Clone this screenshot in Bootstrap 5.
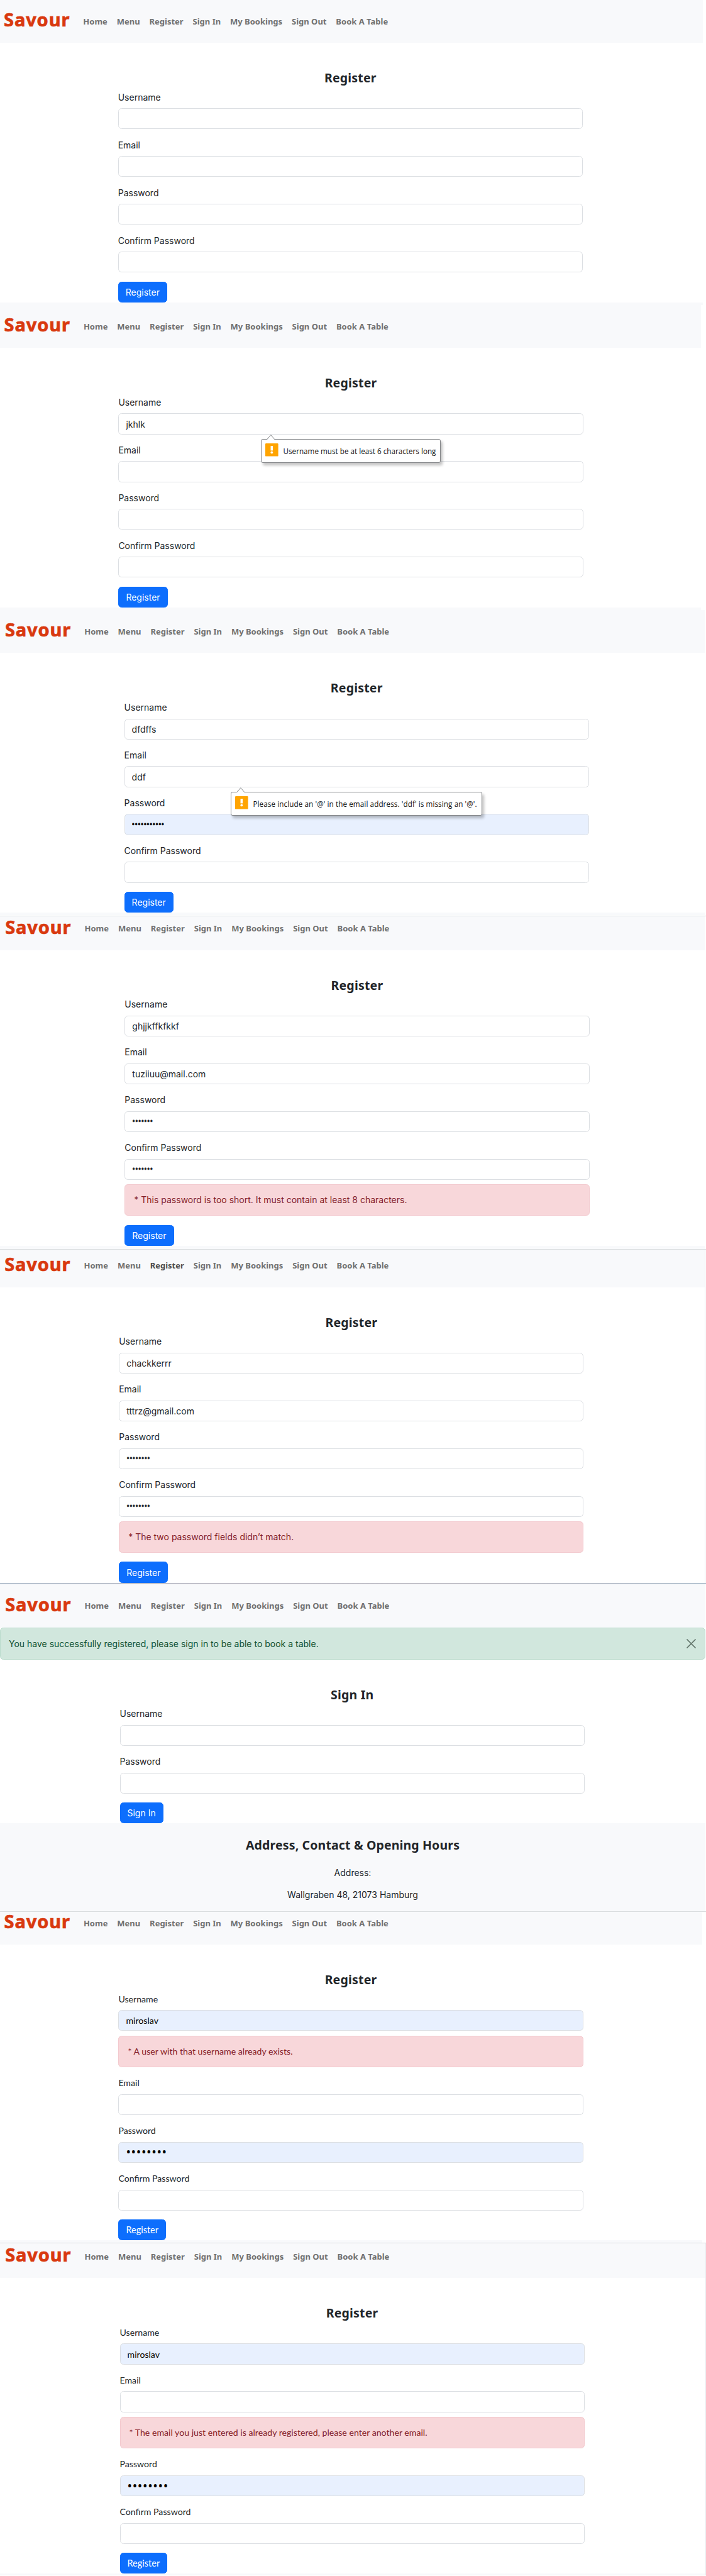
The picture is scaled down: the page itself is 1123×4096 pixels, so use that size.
<!DOCTYPE html>
<html lang="en">
<head>
<meta charset="utf-8">
<meta name="viewport" content="width=device-width, initial-scale=1">
<title>Savour</title>
<link rel="stylesheet" href="https://cdn.jsdelivr.net/npm/bootstrap@5.3.0/dist/css/bootstrap.min.css">
<style>
  body { font-family: Inter, "Liberation Sans", sans-serif; font-size: 14px; line-height: 21.4px; color: #212529; background: #fff; overflow-x: hidden; }
  .screen { width: var(--w, 1123px); }
  .screen.edge { border-right: 1px solid #e9ecef; }
  .site-nav { --bs-navbar-nav-link-padding-x: 7.45px; height: var(--nav, 68.3px); padding: 0 0 22.1px calc(6px + var(--dx, 0px)); background: #f8f9fb; font-family: "Noto Sans", sans-serif; align-items: flex-end; flex-wrap: nowrap; justify-content: flex-start; }
  .site-nav .navbar-brand { font-size: 29px; line-height: 30px; letter-spacing: .9px; font-weight: 700; -webkit-text-stroke: .7px #d9390f; color: #d9390f; padding: 0; margin: 0; width: 118.9px; }
  .site-nav .nav-link { font-size: 13px; line-height: 20px; font-weight: 700; padding-top: 0; padding-bottom: 0; margin-bottom: 2.5px; color: #707070; white-space: nowrap; }
  .site-nav .nav-link.hovered { color: #4b4c4c; }
  .form-col { width: 739.3px; margin-left: var(--left, 188px); padding-top: 43px; }
  .page-title { font-family: "Noto Sans", sans-serif; font-weight: 700; font-size: 19.5px; line-height: 25.4px; letter-spacing: .2px; text-align: center; margin: 0 0 7px; }
  .field { margin-bottom: 14.2px; position: relative; }
  .field .form-label { display: block; height: 21.4px; margin: 0 0 7.3px; }
  .field .form-control { height: 33.1px; padding: 0 11px; font-size: 14px; line-height: 21px; border-radius: 5.4px; border-color: #dcdfe3; color: #212529; }
  .field .form-control.autofilled { background: #e8f0fe; color: #000; }
  .field .form-control.masked { font-family: "Noto Sans", sans-serif; font-size: 12.5px; padding-bottom: 1px; -webkit-text-stroke: .5px currentColor; }
  .msg { height: 50.4px; margin: 7.2px 0 0; padding: 0 14px; border-radius: 5.4px; display: flex; align-items: center; }
  .msg.alert-danger { background: #f8d7da; border-color: #f3c9ce; color: #842029; }
  .msg.alert-success { background: #d1e7dd; border-color: #badbcc; color: #0f5132; margin: 0; height: 50.9px; padding: 0 14px 0 13px; justify-content: space-between; }
  .send { height: 33.1px; padding: 0 11px; font-size: 14px; line-height: 31px; border-radius: 5.4px; background: #0d6efd; border-color: #0d6efd; display: block; }
  .foot-strip { height: var(--strip, 4.4px); background: #f8f9fb; }
  .rule { height: 1.1px; background: #d9dcde; }
  .seam { height: 1.6px; }
  .window-line { height: 1.2px; background: #a9b3be; }
  .window-glow { height: 1.2px; background: linear-gradient(90deg, #cfe0f3, #f3dce2 30%, #f6dfe0 70%, #cfe6f7); }
  .hint { position: absolute; z-index: 2; top: calc(100% + 7.6px); height: 38px; padding: 0 7px 0 6px; display: flex; align-items: center; gap: 7.5px; background: #fff; border: 1px solid #85878a; border-radius: 3px; box-shadow: 3px 4px 4px rgba(0,0,0,.24); font-family: "Open Sans", sans-serif; font-size: 11.7px; color: #111; white-space: nowrap; }
  .hint .warn { width: 20.6px; height: 20.6px; margin-bottom: 3px; flex: none; }
  .hint .tip { position: absolute; left: 8px; top: -8.2px; width: 14px; height: 9px; }
  .hint span { padding-top: 1.5px; }
  .hint-user { left: 227px; }
  .hint-mail { left: 169.7px; letter-spacing: .09px; }
  .lato { font-family: Lato, sans-serif; font-size: 14.15px; }
  .lato .form-control { font-size: 14.15px; }
  .lato .send { font-family: Lato, sans-serif; font-size: 14.5px; }
  .lato .form-control.masked { font-size: 20px; letter-spacing: .65px; -webkit-text-stroke: 0; }
  .site-foot { height: 139.8px; background: #f8f9fb; text-align: center; padding-top: 22.4px; }
  .site-foot h2 { font-family: "Noto Sans", sans-serif; font-weight: 700; font-size: 19.5px; line-height: 24px; letter-spacing: .15px; margin: 0 0 21.6px; }
  .site-foot p { margin: 0 0 13.8px; }
</style>
</head>
<body>

<section class="screen" style="--w:1118px;--left:187.7px">
  <nav class="navbar navbar-expand site-nav">
    <a class="navbar-brand">Savour</a>
    <div class="navbar-nav"><a class="nav-link">Home</a><a class="nav-link">Menu</a><a class="nav-link">Register</a><a class="nav-link">Sign In</a><a class="nav-link">My Bookings</a><a class="nav-link">Sign Out</a><a class="nav-link">Book A Table</a></div>
  </nav>
  <form class="form-col">
    <h2 class="page-title">Register</h2>
    <div class="field"><label class="form-label">Username</label><input class="form-control"></div>
    <div class="field"><label class="form-label">Email</label><input class="form-control"></div>
    <div class="field"><label class="form-label">Password</label><input class="form-control"></div>
    <div class="field"><label class="form-label">Confirm Password</label><input class="form-control"></div>
    <button type="button" class="btn btn-primary send">Register</button>
  </form>
  <div class="foot-strip"></div>
</section>

<section class="screen" style="--w:1114.5px;--left:188.4px;--dx:.6px">
  <nav class="navbar navbar-expand site-nav">
    <a class="navbar-brand">Savour</a>
    <div class="navbar-nav"><a class="nav-link">Home</a><a class="nav-link">Menu</a><a class="nav-link">Register</a><a class="nav-link">Sign In</a><a class="nav-link">My Bookings</a><a class="nav-link">Sign Out</a><a class="nav-link">Book A Table</a></div>
  </nav>
  <form class="form-col">
    <h2 class="page-title">Register</h2>
    <div class="field"><label class="form-label">Username</label><input class="form-control" value="jkhlk">
      <div class="hint hint-user">
        <svg class="tip" viewBox="0 0 14 9"><path d="M0 8.5 L6.8 .7 L13.6 8.5 V9 H0Z" fill="#fff"/><path d="M.4 8 L6.8 .7 L13.2 8" fill="none" stroke="#85878a"/></svg>
        <svg class="warn" viewBox="0 0 21 21"><rect width="21" height="21" rx="1.2" fill="#ffa400"/><path d="M8.7 4.2h3.6v7.4H8.7z" fill="#fff"/><circle cx="10.5" cy="14.7" r="1.9" fill="#fff"/></svg>
        <span>Username must be at least 6 characters long</span>
      </div>
    </div>
    <div class="field"><label class="form-label">Email</label><input class="form-control"></div>
    <div class="field"><label class="form-label">Password</label><input class="form-control"></div>
    <div class="field"><label class="form-label">Confirm Password</label><input class="form-control"></div>
    <button type="button" class="btn btn-primary send">Register</button>
  </form>
  <div class="foot-strip"></div>
</section>

<section class="screen" style="--w:1121px;--left:197.6px;--dx:1.9px;--strip:4px">
  <nav class="navbar navbar-expand site-nav">
    <a class="navbar-brand">Savour</a>
    <div class="navbar-nav"><a class="nav-link">Home</a><a class="nav-link">Menu</a><a class="nav-link">Register</a><a class="nav-link">Sign In</a><a class="nav-link">My Bookings</a><a class="nav-link">Sign Out</a><a class="nav-link">Book A Table</a></div>
  </nav>
  <form class="form-col">
    <h2 class="page-title">Register</h2>
    <div class="field"><label class="form-label">Username</label><input class="form-control" value="dfdffs"></div>
    <div class="field"><label class="form-label">Email</label><input class="form-control" value="ddf">
      <div class="hint hint-mail">
        <svg class="tip" viewBox="0 0 14 9"><path d="M0 8.5 L6.8 .7 L13.6 8.5 V9 H0Z" fill="#fff"/><path d="M.4 8 L6.8 .7 L13.2 8" fill="none" stroke="#85878a"/></svg>
        <svg class="warn" viewBox="0 0 21 21"><rect width="21" height="21" rx="1.2" fill="#ffa400"/><path d="M8.7 4.2h3.6v7.4H8.7z" fill="#fff"/><circle cx="10.5" cy="14.7" r="1.9" fill="#fff"/></svg>
        <span>Please include an '@' in the email address. 'ddf' is missing an '@'.</span>
      </div>
    </div>
    <div class="field"><label class="form-label">Password</label><input class="form-control autofilled masked" value="•••••••••••"></div>
    <div class="field"><label class="form-label">Confirm Password</label><input class="form-control"></div>
    <button type="button" class="btn btn-primary send">Register</button>
  </form>
  <div class="foot-strip"></div>
</section>

<div class="seam"></div>
<div class="rule"></div>
<section class="screen" style="--w:1121px;--left:198.3px;--dx:2.2px;--nav:53.2px;--strip:5.7px">
  <nav class="navbar navbar-expand site-nav">
    <a class="navbar-brand">Savour</a>
    <div class="navbar-nav"><a class="nav-link">Home</a><a class="nav-link">Menu</a><a class="nav-link">Register</a><a class="nav-link">Sign In</a><a class="nav-link">My Bookings</a><a class="nav-link">Sign Out</a><a class="nav-link">Book A Table</a></div>
  </nav>
  <form class="form-col">
    <h2 class="page-title">Register</h2>
    <div class="field"><label class="form-label">Username</label><input class="form-control" value="ghjjkffkfkkf"></div>
    <div class="field"><label class="form-label">Email</label><input class="form-control" value="tuziiuu@mail.com"></div>
    <div class="field"><label class="form-label">Password</label><input class="form-control masked" value="•••••••"></div>
    <div class="field"><label class="form-label">Confirm Password</label><input class="form-control masked" value="•••••••">
      <div class="alert alert-danger msg">* This password is too short. It must contain at least 8 characters.</div></div>
    <button type="button" class="btn btn-primary send">Register</button>
  </form>
  <div class="foot-strip"></div>
</section>

<div class="rule"></div>
<section class="screen edge" style="--w:1122px;--left:189.2px;--dx:1.2px;--nav:59.2px">
  <nav class="navbar navbar-expand site-nav">
    <a class="navbar-brand">Savour</a>
    <div class="navbar-nav"><a class="nav-link">Home</a><a class="nav-link">Menu</a><a class="nav-link hovered">Register</a><a class="nav-link">Sign In</a><a class="nav-link">My Bookings</a><a class="nav-link">Sign Out</a><a class="nav-link">Book A Table</a></div>
  </nav>
  <form class="form-col">
    <h2 class="page-title">Register</h2>
    <div class="field"><label class="form-label">Username</label><input class="form-control" value="chackkerrr"></div>
    <div class="field"><label class="form-label">Email</label><input class="form-control" value="tttrz@gmail.com"></div>
    <div class="field"><label class="form-label">Password</label><input class="form-control masked" value="••••••••"></div>
    <div class="field"><label class="form-label">Confirm Password</label><input class="form-control masked" value="••••••••">
      <div class="alert alert-danger msg">* The two password fields didn’t match.</div></div>
    <button type="button" class="btn btn-primary send">Register</button>
  </form>
</section>

<div class="window-line"></div>
<div class="window-glow"></div>
<section class="screen" style="--w:1122px;--left:190.5px;--dx:2.2px;--nav:69px">
  <nav class="navbar navbar-expand site-nav">
    <a class="navbar-brand">Savour</a>
    <div class="navbar-nav"><a class="nav-link">Home</a><a class="nav-link">Menu</a><a class="nav-link">Register</a><a class="nav-link">Sign In</a><a class="nav-link">My Bookings</a><a class="nav-link">Sign Out</a><a class="nav-link">Book A Table</a></div>
  </nav>
  <div class="alert alert-success msg">
    <span>You have successfully registered, please sign in to be able to book a table.</span>
    <svg width="15" height="15" viewBox="0 0 15 15"><path d="M1 1 14 14M14 1 1 14" stroke="#5f7268" stroke-width="1.7" stroke-linecap="round"/></svg>
  </div>
  <form class="form-col">
    <h2 class="page-title">Sign In</h2>
    <div class="field"><label class="form-label">Username</label><input class="form-control"></div>
    <div class="field"><label class="form-label">Password</label><input class="form-control"></div>
    <button type="button" class="btn btn-primary send">Sign In</button>
  </form>
  <footer class="site-foot">
    <h2>Address, Contact &amp; Opening Hours</h2>
    <p>Address:</p>
    <p>Wallgraben 48, 21073 Hamburg</p>
  </footer>
</section>

<div class="rule"></div>
<section class="screen lato" style="--w:1117px;--left:188.4px;--dx:.6px;--nav:52px;--strip:4px">
  <nav class="navbar navbar-expand site-nav">
    <a class="navbar-brand">Savour</a>
    <div class="navbar-nav"><a class="nav-link">Home</a><a class="nav-link">Menu</a><a class="nav-link">Register</a><a class="nav-link">Sign In</a><a class="nav-link">My Bookings</a><a class="nav-link">Sign Out</a><a class="nav-link">Book A Table</a></div>
  </nav>
  <form class="form-col">
    <h2 class="page-title">Register</h2>
    <div class="field"><label class="form-label">Username</label><input class="form-control autofilled" value="miroslav">
      <div class="alert alert-danger msg">* A user with that username already exists.</div></div>
    <div class="field"><label class="form-label">Email</label><input class="form-control"></div>
    <div class="field"><label class="form-label">Password</label><input class="form-control autofilled masked" value="••••••••"></div>
    <div class="field"><label class="form-label">Confirm Password</label><input class="form-control"></div>
    <button type="button" class="btn btn-primary send">Register</button>
  </form>
  <div class="foot-strip"></div>
</section>

<div class="rule"></div>
<section class="screen lato edge" style="--w:1123px;--left:190.5px;--dx:2.2px;--nav:55.2px;--strip:3px">
  <nav class="navbar navbar-expand site-nav">
    <a class="navbar-brand">Savour</a>
    <div class="navbar-nav"><a class="nav-link">Home</a><a class="nav-link">Menu</a><a class="nav-link">Register</a><a class="nav-link">Sign In</a><a class="nav-link">My Bookings</a><a class="nav-link">Sign Out</a><a class="nav-link">Book A Table</a></div>
  </nav>
  <form class="form-col">
    <h2 class="page-title">Register</h2>
    <div class="field"><label class="form-label">Username</label><input class="form-control autofilled" value="miroslav"></div>
    <div class="field"><label class="form-label">Email</label><input class="form-control">
      <div class="alert alert-danger msg">* The email you just entered is already registered, please enter another email.</div></div>
    <div class="field"><label class="form-label">Password</label><input class="form-control autofilled masked" value="••••••••"></div>
    <div class="field"><label class="form-label">Confirm Password</label><input class="form-control"></div>
    <button type="button" class="btn btn-primary send">Register</button>
  </form>
  <div class="foot-strip"></div>
</section>

<script src="https://cdn.jsdelivr.net/npm/bootstrap@5.3.0/dist/js/bootstrap.bundle.min.js"></script>
</body>
</html>
